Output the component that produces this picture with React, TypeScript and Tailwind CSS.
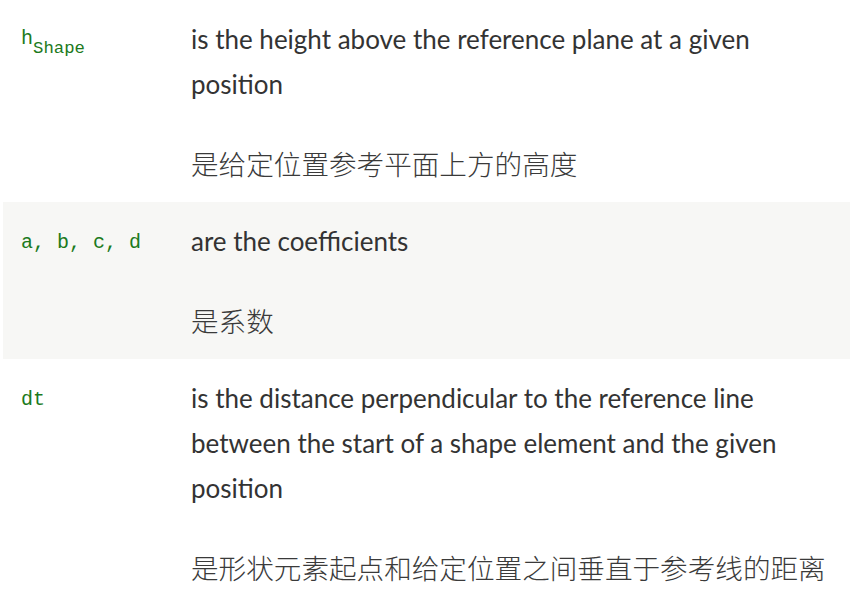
import React from 'react';

type Row = {
  term: React.ReactNode;
  en: string;
  zh: string;
  shaded?: boolean;
};

const rows: Row[] = [
  {
    term: (
      <>
        h<sub className="text-[17.3px] align-[-4px] leading-none">Shape</sub>
      </>
    ),
    en: 'is the height above the reference plane at a given position',
    zh: '是给定位置参考平面上方的高度',
  },
  {
    term: 'a, b, c, d',
    en: 'are the coefficients',
    zh: '是系数',
    shaded: true,
  },
  {
    term: 'dt',
    en: 'is the distance perpendicular to the reference line between the start of a shape element and the given position',
    zh: '是形状元素起点和给定位置之间垂直于参考线的距离',
  },
];

export default function App() {
  return (
    <div className="w-[850px] h-[602px] overflow-hidden bg-white pl-[3px]">
      {rows.map((r, i) => (
        <div key={i} className={`flex pt-[17px] pb-[16px] ${r.shaded ? 'bg-[#f7f7f5]' : ''}`}>
          <div className="w-[188px] shrink-0 pl-[18px] pr-[18px] h-[45px] pt-[3px] flex items-center">
            <span className="font-['Liberation_Mono',monospace] text-[20px] leading-none text-[#1c7a1c] whitespace-pre">
              {r.term}
            </span>
          </div>
          <div className="flex-1 pr-[18px] text-[#333333]">
            <p className="font-['Lato',sans-serif] text-[26px] leading-[45px]">{r.en}</p>
            <p className="mt-[34px] font-['Noto_Sans_CJK_SC',sans-serif] font-light text-[27.6px] leading-[45px] text-[#3a3a3a]">
              {r.zh}
            </p>
          </div>
        </div>
      ))}
    </div>
  );
}
